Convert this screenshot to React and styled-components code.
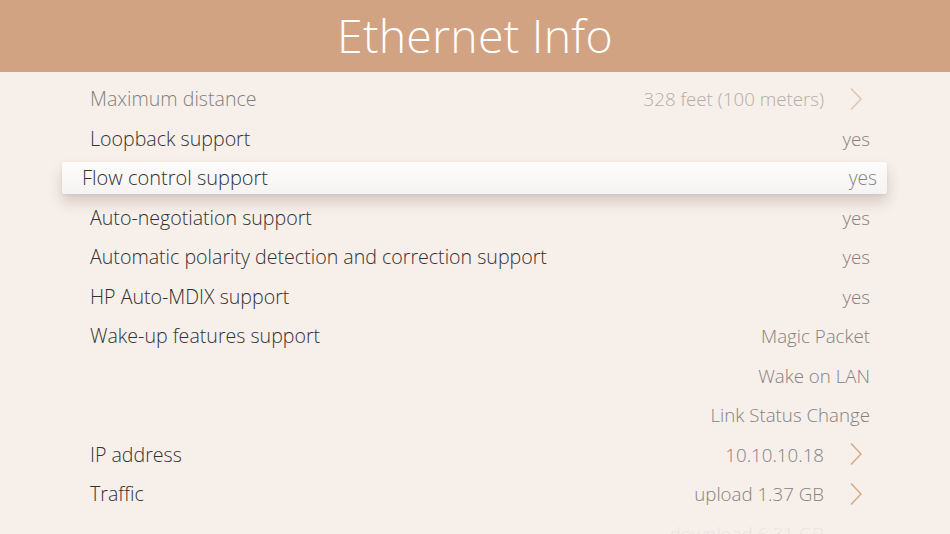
import React from 'react';
import styled, { createGlobalStyle } from 'styled-components';

const GlobalStyle = createGlobalStyle`
  html, body {
    margin: 0;
    padding: 0;
    background: #f7efea;
    font-family: "Open Sans", "Noto Sans", sans-serif;
  }
`;

const rows = [
  { label: 'Maximum distance', value: '328 feet (100 meters)', link: true, dim: true },
  { label: 'Loopback support', value: 'yes' },
  { label: 'Flow control support', value: 'yes', focused: true },
  { label: 'Auto-negotiation support', value: 'yes' },
  { label: 'Automatic polarity detection and correction support', value: 'yes' },
  { label: 'HP Auto-MDIX support', value: 'yes' },
  { label: 'Wake-up features support', value: 'Magic Packet' },
  { label: '', value: 'Wake on LAN' },
  { label: '', value: 'Link Status Change' },
  { label: 'IP address', value: '10.10.10.18', link: true },
  { label: 'Traffic', value: 'upload 1.37 GB', link: true },
  { label: '', value: 'download 6.31 GB', link: true, fade: true },
];

const Chevron = ({ hidden }) => (
  <ChevronIcon viewBox="0 0 12 24" width="12" height="24" $hidden={hidden}>
    <polyline points="1,1.5 11,12 1,22.5" fill="none" stroke="#d6a888" strokeWidth="1.5" />
  </ChevronIcon>
);

const App = () => (
  <Page>
    <GlobalStyle />
    <Header>
      <h1 className="title">Ethernet Info</h1>
    </Header>
    <List>
      {rows.map((row, i) => (
        <Row key={i}>
          <Item $focused={row.focused} $dim={row.dim} $fade={row.fade}>
            <Label>{row.label}</Label>
            <Value $link={row.link}>
              {row.value}
              {row.link && <Chevron hidden={row.fade} />}
            </Value>
          </Item>
        </Row>
      ))}
    </List>
  </Page>
);

const Page = styled.div`
  width: 950px;
  height: 534px;
  overflow: hidden;
  display: flex;
  flex-direction: column;
  background: #f7efea;
`;

const Header = styled.header`
  height: 72px;
  flex-shrink: 0;
  background: #d2a382;
  display: flex;
  align-items: center;
  justify-content: center;

  .title {
    margin: 0;
    font-size: 46.5px;
    font-weight: 300;
    color: #ffffff;
    letter-spacing: 0.2px;
    line-height: 1;
    padding-bottom: 2px;
  }
`;

const List = styled.div`
  display: flex;
  flex-direction: column;
  padding: 7px 80px 0 90px;
`;

const Row = styled.div`
  height: 39.5px;
  flex-shrink: 0;
  display: flex;
  align-items: center;
`;

const Item = styled.div`
  flex: 1;
  height: 32px;
  display: flex;
  align-items: center;
  justify-content: space-between;
  font-weight: 300;
  opacity: ${(p) => (p.$fade ? 0.1 : p.$dim ? 0.6 : 1)};
  --label-size: 19.6px;
  --value-size: 18.7px;
  ${(p) =>
    p.$focused &&
    `
    margin: 0 -17px 0 -28px;
    padding: 0 10px 0 20px;
    background: linear-gradient(#fdfcfb, #f6f4f2);
    border-radius: 3px;
    box-shadow: 0 8px 14px rgba(60, 40, 30, 0.18), 0 1px 3px rgba(60, 40, 30, 0.08);
    --label-size: 20px;
    --value-size: 19.2px;
  `}
`;

const Label = styled.span`
  font-size: var(--label-size);
  color: #333131;
  white-space: nowrap;
`;

const Value = styled.span`
  display: flex;
  align-items: center;
  font-size: var(--value-size);
  color: #848281;
  white-space: nowrap;
  ${(p) => p.$link && 'margin-right: 8px;'}
`;

const ChevronIcon = styled.svg`
  margin-left: 26px;
  display: block;
  visibility: ${(p) => (p.$hidden ? 'hidden' : 'visible')};
`;

export default App;
